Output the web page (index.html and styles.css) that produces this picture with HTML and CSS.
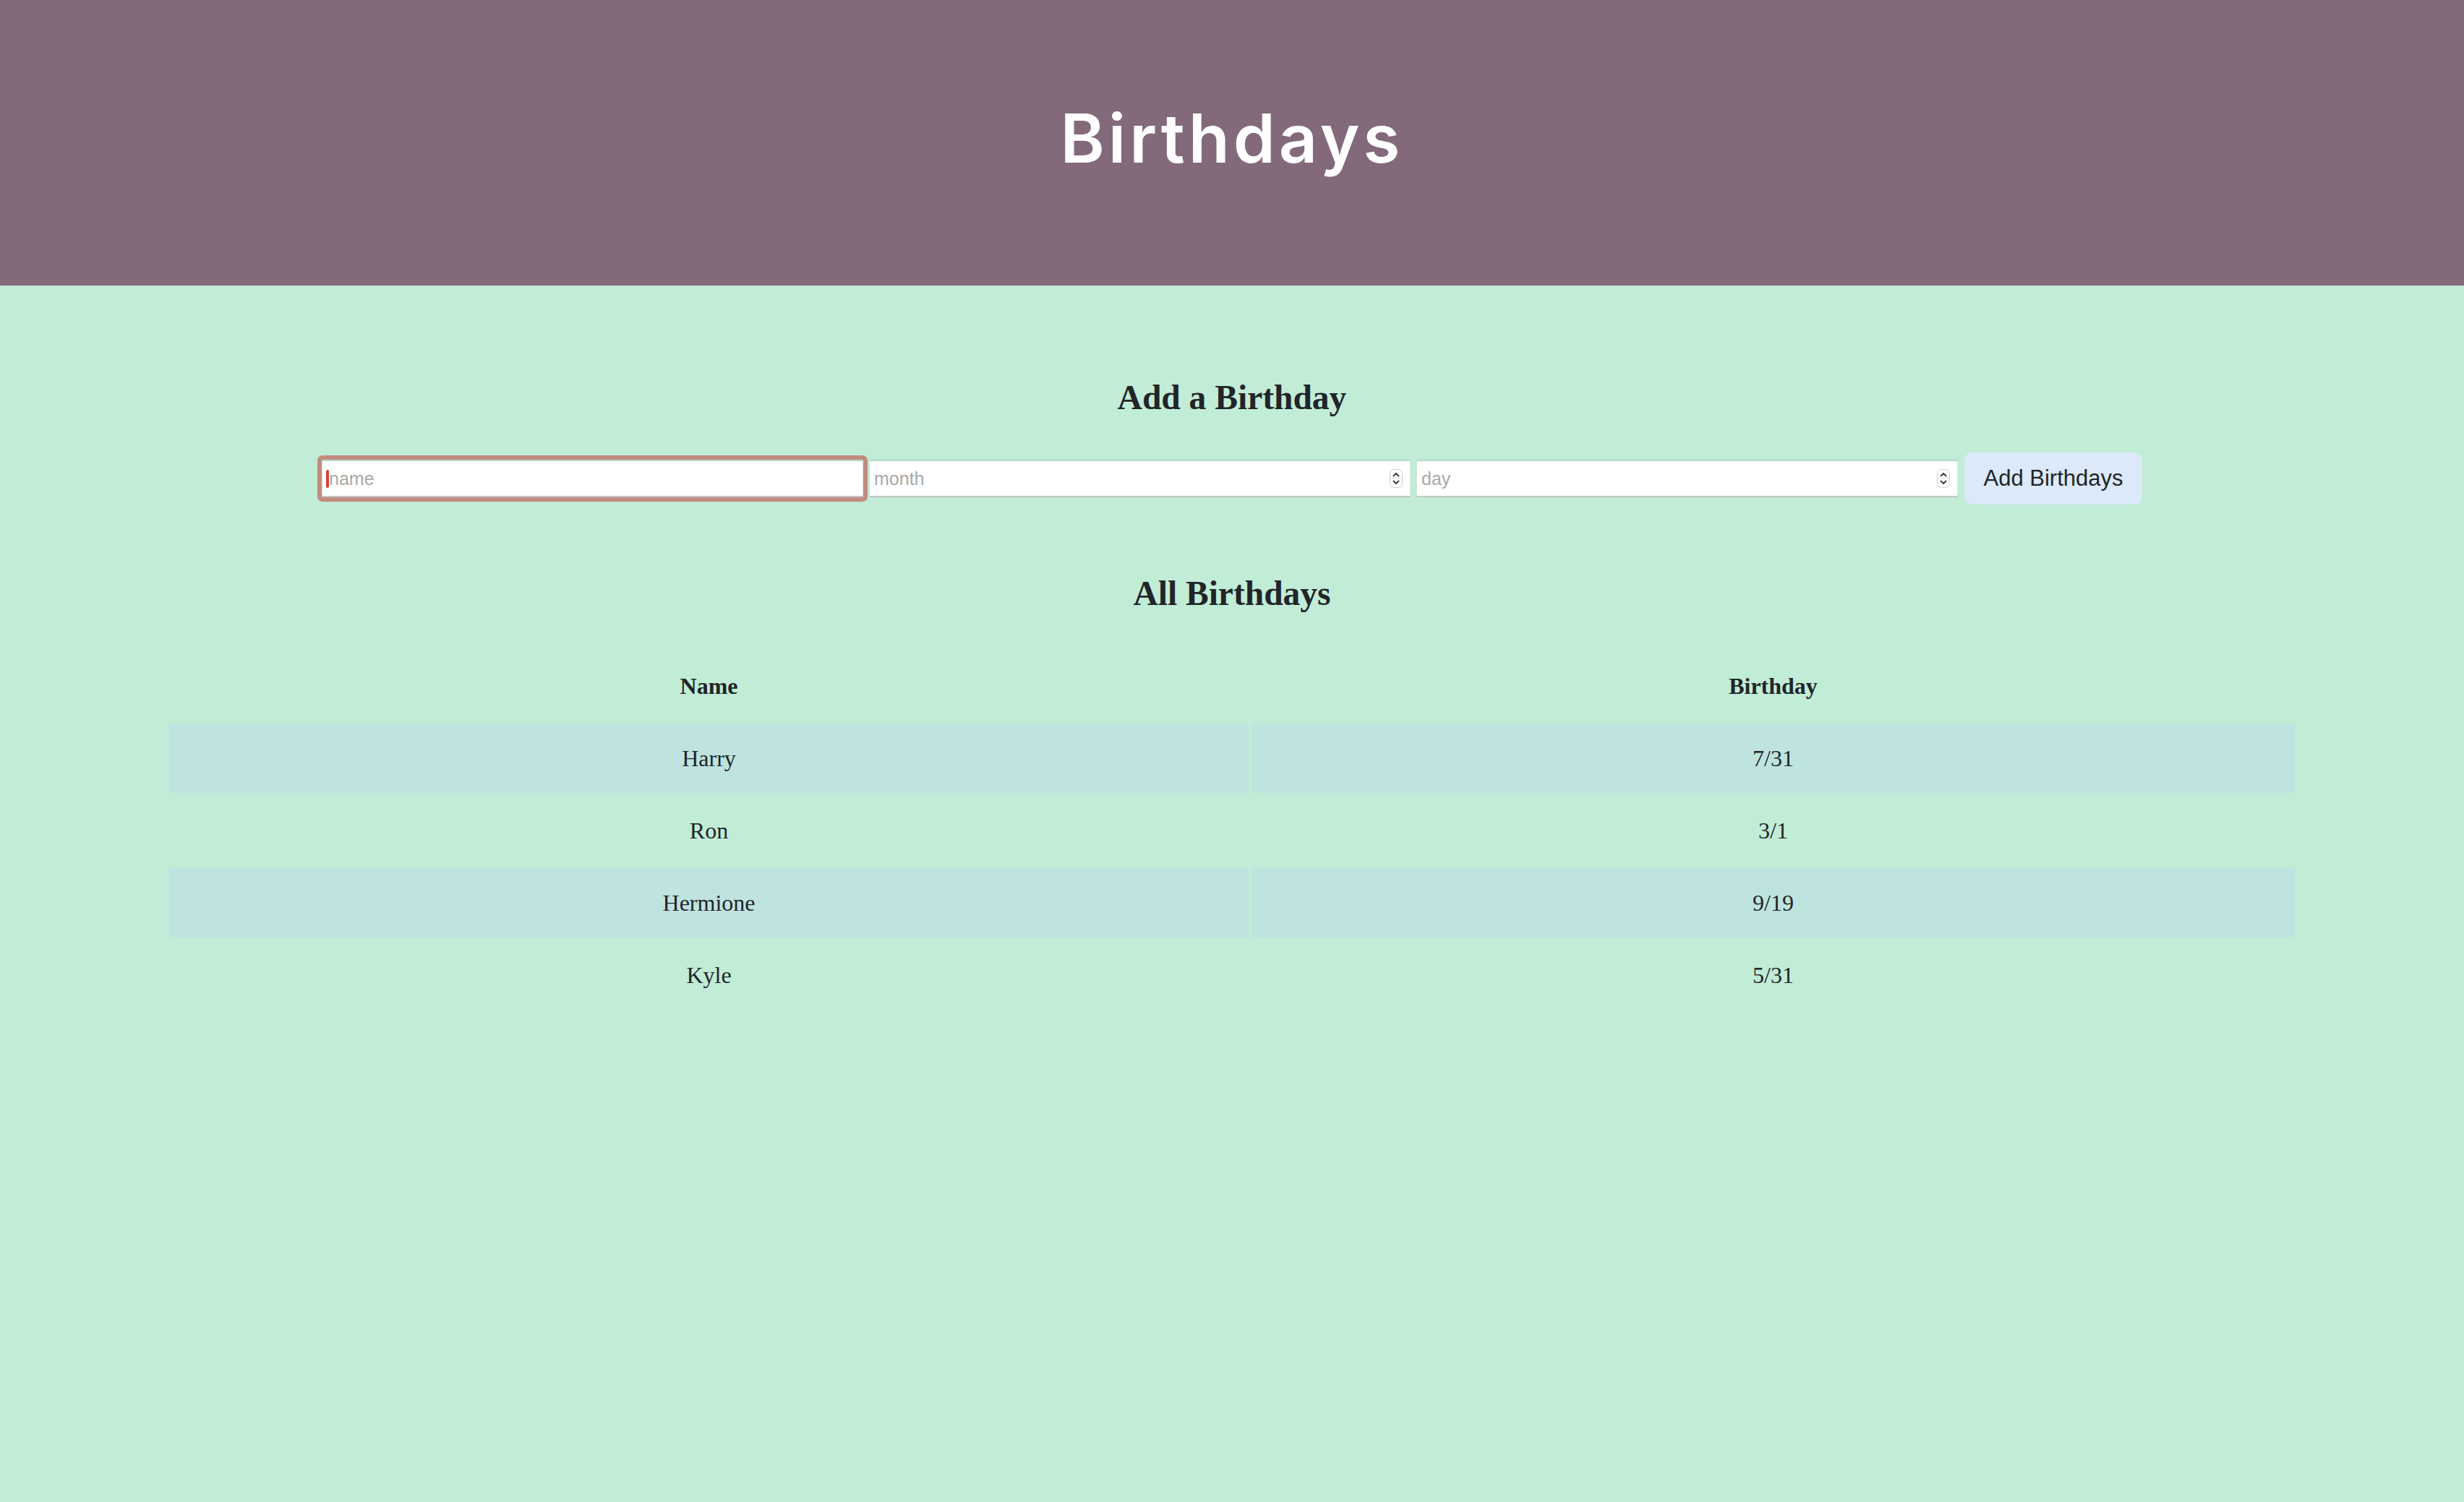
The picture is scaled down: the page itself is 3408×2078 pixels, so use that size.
FILE: index.html
```html
<!DOCTYPE html>
<html lang="en">
<head>
    <meta charset="UTF-8">
    <meta name="viewport" content="width=device-width, initial-scale=1.0">
    <title>Birthdays</title>
    <link rel="stylesheet" href="styles.css">
</head>
<body>
    <div class="header">
        <h1>Birthdays</h1>
    </div>
    <div class="container">
        <div class="section">
            <h2>Add a Birthday</h2>
            <form class="add-form">
                <div class="field focused">
                    <span class="caret"></span>
                    <input type="text" name="name" placeholder="name">
                </div>
                <div class="field">
                    <input type="text" name="month" placeholder="month">
                    <svg class="spin" width="18" height="26" viewBox="0 0 18 26">
                        <rect x="0.5" y="0.5" width="17" height="25" rx="5" fill="#fff" stroke="#d0d0d0"/>
                        <line x1="1" y1="13" x2="17" y2="13" stroke="#dcdcdc"/>
                        <path d="M5.5 9.5 L9 6 L12.5 9.5" fill="none" stroke="#333" stroke-width="1.8" stroke-linecap="round"/>
                        <path d="M5.5 16.5 L9 20 L12.5 16.5" fill="none" stroke="#333" stroke-width="1.8" stroke-linecap="round"/>
                    </svg>
                </div>
                <div class="field">
                    <input type="text" name="day" placeholder="day">
                    <svg class="spin" width="18" height="26" viewBox="0 0 18 26">
                        <rect x="0.5" y="0.5" width="17" height="25" rx="5" fill="#fff" stroke="#d0d0d0"/>
                        <line x1="1" y1="13" x2="17" y2="13" stroke="#dcdcdc"/>
                        <path d="M5.5 9.5 L9 6 L12.5 9.5" fill="none" stroke="#333" stroke-width="1.8" stroke-linecap="round"/>
                        <path d="M5.5 16.5 L9 20 L12.5 16.5" fill="none" stroke="#333" stroke-width="1.8" stroke-linecap="round"/>
                    </svg>
                </div>
                <button type="submit" class="add-btn">Add Birthdays</button>
            </form>
        </div>
        <div class="section">
            <h2 class="list-title">All Birthdays</h2>
            <table class="birthdays">
                <colgroup>
                    <col class="col-name">
                    <col class="col-date">
                </colgroup>
                <thead>
                    <tr>
                        <th>Name</th>
                        <th>Birthday</th>
                    </tr>
                </thead>
                <tbody>
                    <tr><td>Harry</td><td>7/31</td></tr>
                    <tr><td>Ron</td><td>3/1</td></tr>
                    <tr><td>Hermione</td><td>9/19</td></tr>
                    <tr><td>Kyle</td><td>5/31</td></tr>
                </tbody>
            </table>
        </div>
    </div>
</body>
</html>
```

FILE: styles.css
```css
body {
    margin: 0;
    background-color: #c1ecd6;
    font-family: 'Liberation Serif', 'Times New Roman', serif;
    color: #212529;
}
.header {
    box-sizing: border-box;
    height: 395px;
    padding-top: 136px;
    background-color: #836a7b;
    text-align: center;
}
.header h1 {
    margin: 0;
    font-family: Inter, 'Open Sans', sans-serif;
    font-weight: 600;
    font-size: 93px;
    line-height: 110px;
    letter-spacing: 5px;
    color: #fff;
}
.container {
    padding-top: 128px;
}
h2 {
    margin: 0;
    font-size: 47.5px;
    line-height: 55px;
    font-weight: bold;
    text-align: center;
}
.add-form {
    display: flex;
    justify-content: center;
    align-items: center;
    gap: 8px;
    margin-top: 48px;
}
.field {
    box-sizing: border-box;
    display: flex;
    align-items: center;
    width: 749px;
    height: 52px;
    padding: 0 10px 0 6px;
    background-color: #fff;
    border-top: 2px solid #b2dcc6;
    border-bottom: 2px solid #c3c6c4;
    border-left: 1px solid #d4e6dc;
    border-right: 1px solid #e2e2e2;
}
.field.focused {
    padding-left: 5px;
    outline: 6px solid #c38b7f;
    border-radius: 1px;
}
.caret {
    width: 4px;
    height: 25px;
    border-radius: 2px;
    background-color: #d6403c;
}
.field input {
    flex: 1;
    min-width: 0;
    border: none;
    outline: none;
    padding: 0;
    background: transparent;
    font-family: 'Liberation Sans', Arial, sans-serif;
    font-size: 25px;
    color: #333;
}
.field input::placeholder {
    color: #a9a9a9;
}
.spin {
    flex: none;
}
.add-btn {
    width: 246px;
    height: 72px;
    margin-left: 1px;
    padding: 0;
    border: none;
    border-radius: 10px;
    background-color: #dbe9f9;
    font-family: 'Liberation Sans', Arial, sans-serif;
    font-size: 31px;
    color: #212529;
}
.list-title {
    margin-top: 96px;
}
.birthdays {
    table-layout: fixed;
    width: 2948px;
    margin: 48px auto 0;
    border-spacing: 4px;
    font-size: 32px;
    line-height: 36px;
    text-align: center;
}
.col-name {
    width: 1493px;
}
.col-date {
    width: 1443px;
}
.birthdays th,
.birthdays td {
    padding: 30px 0;
}
.birthdays tbody tr:nth-child(odd) td {
    background-color: #bfe3df;
}
```
